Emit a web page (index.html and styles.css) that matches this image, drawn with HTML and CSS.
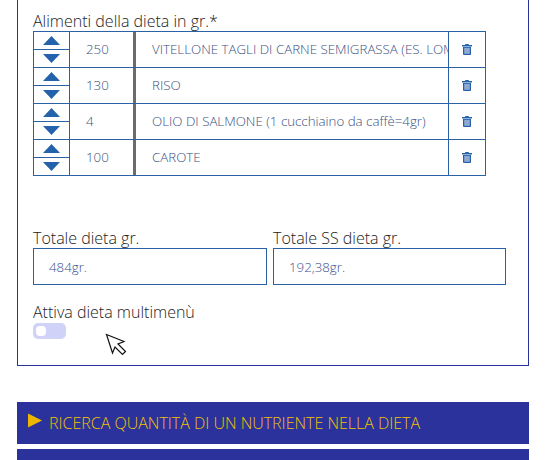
FILE: index.html
```html
<!DOCTYPE html>
<html lang="it">
<head>
<meta charset="utf-8">
<title>Dieta</title>
<link rel="stylesheet" href="styles.css">
</head>
<body>
<section class="panel">
  <div class="label first">Alimenti della dieta in gr.*</div>
  <div class="foods">
    <div class="row">
      <div class="steppers"><button class="step"><svg width="17" height="9" viewBox="0 0 17 9"><path d="M8.5 0 17 9H0Z"/></svg></button><button class="step"><svg width="17" height="9" viewBox="0 0 17 9"><path d="M0 0H17L8.5 9Z"/></svg></button></div>
      <div class="qty">250</div>
      <div class="name">VITELLONE TAGLI DI CARNE SEMIGRASSA (ES. LOMBATA)</div>
      <div class="del"><svg class="trash" width="10" height="11" viewBox="0 0 10 11"><path class="lid" d="M3.5 0h3l.5 1h3v1.5H0V1H3Z"/><path class="bin" d="M1 3h8v7a1 1 0 0 1-1 1H2a1 1 0 0 1-1-1Z"/><rect class="inner" x="2.2" y="3.8" width="5.6" height="6"/></svg></div>
    </div>
    <div class="row">
      <div class="steppers"><button class="step"><svg width="17" height="9" viewBox="0 0 17 9"><path d="M8.5 0 17 9H0Z"/></svg></button><button class="step"><svg width="17" height="9" viewBox="0 0 17 9"><path d="M0 0H17L8.5 9Z"/></svg></button></div>
      <div class="qty">130</div>
      <div class="name">RISO</div>
      <div class="del"><svg class="trash" width="10" height="11" viewBox="0 0 10 11"><path class="lid" d="M3.5 0h3l.5 1h3v1.5H0V1H3Z"/><path class="bin" d="M1 3h8v7a1 1 0 0 1-1 1H2a1 1 0 0 1-1-1Z"/><rect class="inner" x="2.2" y="3.8" width="5.6" height="6"/></svg></div>
    </div>
    <div class="row">
      <div class="steppers"><button class="step"><svg width="17" height="9" viewBox="0 0 17 9"><path d="M8.5 0 17 9H0Z"/></svg></button><button class="step"><svg width="17" height="9" viewBox="0 0 17 9"><path d="M0 0H17L8.5 9Z"/></svg></button></div>
      <div class="qty">4</div>
      <div class="name">OLIO DI SALMONE (1 cucchiaino da caffè=4gr)</div>
      <div class="del"><svg class="trash" width="10" height="11" viewBox="0 0 10 11"><path class="lid" d="M3.5 0h3l.5 1h3v1.5H0V1H3Z"/><path class="bin" d="M1 3h8v7a1 1 0 0 1-1 1H2a1 1 0 0 1-1-1Z"/><rect class="inner" x="2.2" y="3.8" width="5.6" height="6"/></svg></div>
    </div>
    <div class="row">
      <div class="steppers"><button class="step"><svg width="17" height="9" viewBox="0 0 17 9"><path d="M8.5 0 17 9H0Z"/></svg></button><button class="step"><svg width="17" height="9" viewBox="0 0 17 9"><path d="M0 0H17L8.5 9Z"/></svg></button></div>
      <div class="qty">100</div>
      <div class="name">CAROTE</div>
      <div class="del"><svg class="trash" width="10" height="11" viewBox="0 0 10 11"><path class="lid" d="M3.5 0h3l.5 1h3v1.5H0V1H3Z"/><path class="bin" d="M1 3h8v7a1 1 0 0 1-1 1H2a1 1 0 0 1-1-1Z"/><rect class="inner" x="2.2" y="3.8" width="5.6" height="6"/></svg></div>
    </div>
  </div>
  <div class="totals">
    <div class="total">
      <div class="label">Totale dieta gr.</div>
      <div class="box">484gr.</div>
    </div>
    <div class="total">
      <div class="label">Totale SS dieta gr.</div>
      <div class="box">192,38gr.</div>
    </div>
  </div>
  <div class="label multi">Attiva dieta multimenù</div>
  <div class="toggle"><span class="knob"></span></div>
  <svg class="cursor" width="22" height="23" viewBox="0 0 22 23"><path d="M1.5 1.5 19 8.5 13 11 20.5 18.5 17.5 21.5 10 14 7.5 20Z"/></svg>
</section>
<div class="accordion">
  <svg class="play" width="14" height="15" viewBox="0 0 14 15"><path d="M0 0.5 14 7.5 0 14.5Z"/></svg>
  <span>RICERCA QUANTITÀ DI UN NUTRIENTE NELLA DIETA</span>
</div>
<div class="accordion next"></div>
</body>
</html>
```
FILE: styles.css
```css
* { box-sizing: border-box; }
html, body { margin: 0; padding: 0; height: 460px; overflow: hidden; background: #fff; }
body { font-family: "Open Sans", sans-serif; color: #222; }
.panel {
  position: relative;
  margin-left: 17px;
  width: 512px;
  height: 366px;
  padding: 12px 15px 0;
  border: 1px solid #2b329b;
  border-top: 0;
}
.label { font-size: 16px; font-weight: 300; line-height: 19px; color: #222; white-space: nowrap; }
.foods { width: 453px; border: 1px solid #2a62a5; border-bottom: 0; }
.row { display: flex; height: 36px; border-bottom: 1px solid #2a62a5; }
.steppers { width: 36px; flex: none; display: flex; flex-direction: column; border-right: 1px solid #2a62a5; }
.step { flex: 1; display: flex; align-items: center; justify-content: center; padding: 0; border: 0; background: none; }
.step + .step { border-top: 1px solid #2a62a5; }
.step svg { fill: #2463ab; display: block; }
.qty { width: 66px; flex: none; padding-left: 16px; font-size: 13.3px; font-weight: 300; line-height: 35px; color: #3c4f80; border-right: 3px solid #6b6b6b; }
.name { flex: 1; min-width: 0; padding-left: 16px; font-size: 13.3px; font-weight: 300; line-height: 35px; color: #3c4f80; white-space: nowrap; overflow: hidden; }
.del { width: 37px; flex: none; display: flex; align-items: center; justify-content: center; border-left: 1px solid #2a62a5; }
.trash .lid, .trash .bin { fill: #2463ab; }
.trash .inner { fill: #8fa9cf; }
.totals { display: flex; gap: 6px; margin-top: 53px; }
.total { width: 234px; }
.total + .total { width: 233px; }
.box { height: 37px; border: 1px solid #2a62a5; padding-left: 15px; font-size: 13.3px; font-weight: 300; line-height: 37px; color: #3c4f90; }
.multi { margin-top: 18px; }
.toggle { width: 33px; height: 16px; margin-top: 1px; padding: 3px; border-radius: 5px; background: #d0d2f8; }
.knob { display: block; width: 10px; height: 10px; border-radius: 4px; background: #fff; }
.cursor { position: absolute; left: 87px; top: 333px; fill: #fff; stroke: #111; stroke-width: 1.2; }
.accordion {
  display: flex;
  align-items: center;
  margin: 36px 0 0 17px;
  width: 512px;
  height: 42px;
  padding-left: 11px;
  gap: 7px;
  background: #2b329b;
  color: #f2c200;
  font-size: 16px;
  font-weight: 300;
}
.play { fill: #eeb600; margin-top: -5px; }
.next { margin-top: 5px; }
```
